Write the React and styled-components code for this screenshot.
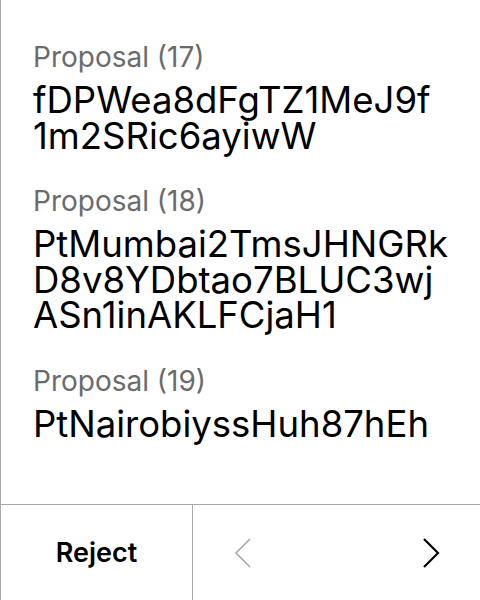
import styled, { createGlobalStyle } from "styled-components";

const GlobalStyle = createGlobalStyle`
    html, body {
        margin: 0;
        padding: 0;
        background: #fff;
    }
    body {
        font-family: Inter, "Noto Sans", sans-serif;
        color: #000;
    }
`;

// hashes are shown broken into the same rows as the wallet screen
const proposals = [
    { index: 17, rows: ["fDPWea8dFgTZ1MeJ9f", "1m2SRic6ayiwW"] },
    { index: 18, rows: ["PtMumbai2TmsJHNGRk", "D8v8YDbtao7BLUC3wj", "ASn1inAKLFCjaH1"] },
    { index: 19, rows: ["PtNairobiyssHuh87hEh"] },
];

const App = () => {
    return (
        <>
            <GlobalStyle />
            <Panel>
                <List>
                    {proposals.map((p) => (
                        <Item key={p.index}>
                            <Label>Proposal ({p.index})</Label>
                            <Hash>
                                {p.rows.map((row) => (
                                    <HashRow key={row}>{row}</HashRow>
                                ))}
                            </Hash>
                        </Item>
                    ))}
                </List>

                <Footer>
                    <RejectButton>Reject</RejectButton>
                    <Pager>
                        <Arrow disabled aria-label="previous">
                            <svg width="18" height="32" viewBox="0 0 18 32" fill="none">
                                <path d="M16 2 L2 16 L16 30" stroke="currentColor" strokeWidth="1.6" />
                            </svg>
                        </Arrow>
                        <Arrow aria-label="next">
                            <svg width="18" height="32" viewBox="0 0 18 32" fill="none">
                                <path d="M2 2 L16 16 L2 30" stroke="currentColor" strokeWidth="2.2" />
                            </svg>
                        </Arrow>
                    </Pager>
                </Footer>
            </Panel>
        </>
    );
};

const Panel = styled.section`
    height: 600px;
    box-sizing: border-box;
    border-left: 1px solid #a8a8a8;
    display: flex;
    flex-direction: column;
`;

const List = styled.div`
    flex: 1;
    padding: 41px 12px 0 32px;
    display: flex;
    flex-direction: column;
    gap: 31px;
`;

const Item = styled.div`
    display: flex;
    flex-direction: column;
    gap: 10px;
`;

const Label = styled.div`
    font-size: 28px;
    line-height: 32px;
    color: #6b6b6b;
`;

const Hash = styled.div`
    font-size: 36.5px;
    line-height: 35.5px;
    color: #000;
`;

const HashRow = styled.div`
    white-space: nowrap;
`;

const Footer = styled.div`
    height: 96px;
    box-sizing: border-box;
    border-top: 1px solid #a8a8a8;
    display: grid;
    grid-template-columns: 192px 1fr;
`;

const RejectButton = styled.button`
    border: none;
    border-right: 1px solid #a8a8a8;
    background: none;
    font-family: Inter, "Noto Sans", sans-serif;
    font-size: 27px;
    font-weight: 600;
    color: #000;
    cursor: pointer;
`;

const Pager = styled.div`
    display: flex;
    align-items: center;
    justify-content: space-between;
    padding: 0 40px 0 41px;
`;

const Arrow = styled.button`
    border: none;
    background: none;
    padding: 0;
    display: flex;
    color: ${({ disabled }) => (disabled ? "#a8a8a8" : "#000")};
    cursor: ${({ disabled }) => (disabled ? "default" : "pointer")};
`;

export default App;
